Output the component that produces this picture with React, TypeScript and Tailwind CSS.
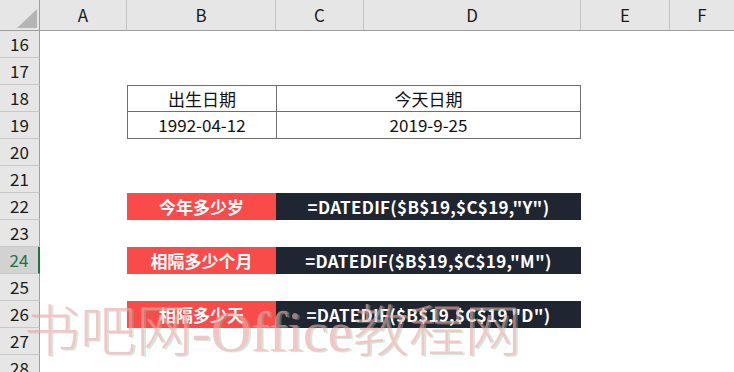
import * as React from 'react';

const cols = ['A', 'B', 'C', 'D', 'E', 'F'];
const rowNums = [16, 17, 18, 19, 20, 21, 22, 23, 24, 25, 26, 27, 28];

const formulas: Record<number, { label: string; formula: string }> = {
  22: { label: '今年多少岁', formula: '=DATEDIF($B$19,$C$19,"Y")' },
  24: { label: '相隔多少个月', formula: '=DATEDIF($B$19,$C$19,"M")' },
  26: { label: '相隔多少天', formula: '=DATEDIF($B$19,$C$19,"D")' },
};

const font = { fontFamily: '"Noto Sans CJK SC", "Noto Sans", sans-serif' };

const RowCells: React.FC<{ n: number }> = ({ n }) => {
  if (n === 18 || n === 19) {
    const left = n === 18 ? '出生日期' : '1992-04-12';
    const right = n === 18 ? '今天日期' : '2019-9-25';
    const top = n === 18 ? 'border-t' : '';
    return (
      <>
        <div />
        <div className={`flex items-center justify-center border-l border-b border-[#6e6e6e] text-[17px] text-[#111] ${top}`}>
          {left}
        </div>
        <div className={`col-span-2 flex items-center justify-center border-l border-r border-b border-[#6e6e6e] text-[17px] text-[#111] ${top}`}>
          {right}
        </div>
        <div />
        <div />
      </>
    );
  }
  const f = formulas[n];
  if (f) {
    return (
      <>
        <div />
        <div className="flex items-center justify-center bg-[#fa4b4b] text-[17px] font-bold text-white">
          {f.label}
        </div>
        <div className="col-span-2 flex items-center justify-center bg-[#1f2631] text-[17px] font-bold tracking-[0.3px] text-white">
          {f.formula}
        </div>
        <div />
        <div />
      </>
    );
  }
  return (
    <>
      <div />
      <div />
      <div />
      <div />
      <div />
      <div />
    </>
  );
};

export default function App() {
  return (
    <div className="relative h-[372px] w-[734px] overflow-hidden bg-white" style={font}>
      <div className="grid grid-cols-[40px_87px_149px_88px_217px_89px_1fr] grid-rows-[31px_repeat(13,27px)]">
        {/* corner */}
        <div className="relative border-b border-r border-[#9e9e9e] bg-[#e6e6e6]">
          <svg className="absolute left-[17px] top-[9px]" width="20" height="19" viewBox="0 0 20 19">
            <polygon points="20,0 20,19 0,19" fill="#b5b5b5" />
          </svg>
        </div>
        {cols.map((c, i) => (
          <div
            key={c}
            className={`flex items-center justify-center border-b border-[#9e9e9e] bg-[#e6e6e6] text-[17px] text-[#1a1a1a] ${
              i < cols.length - 1 ? 'border-r-[#c4c4c4] border-r' : ''
            }`}
          >
            {c}
          </div>
        ))}

        {rowNums.map((n) => (
          <React.Fragment key={n}>
            <div
              className={`flex items-center justify-center border-b border-b-[#c8c8c8] text-[17px] ${
                n === 24
                  ? 'border-r-2 border-r-[#217346] bg-[#d2d2d2] text-[#217346]'
                  : 'border-r border-r-[#9e9e9e] bg-[#e6e6e6] text-[#1a1a1a]'
              }`}
            >
              {n}
            </div>
            <RowCells n={n} />
          </React.Fragment>
        ))}
      </div>

      {/* watermark */}
      <div
        className="pointer-events-none absolute left-[24px] top-[304px] whitespace-nowrap text-[56px] font-light leading-none text-[#eaa8a8] opacity-65"
        style={{
          fontFamily: '"Liberation Serif", "Noto Sans CJK SC", serif',
          textShadow: '2px 1px 0 rgba(140,200,160,0.6)',
        }}
      >
        书吧网-Office教程网
      </div>
    </div>
  );
}
